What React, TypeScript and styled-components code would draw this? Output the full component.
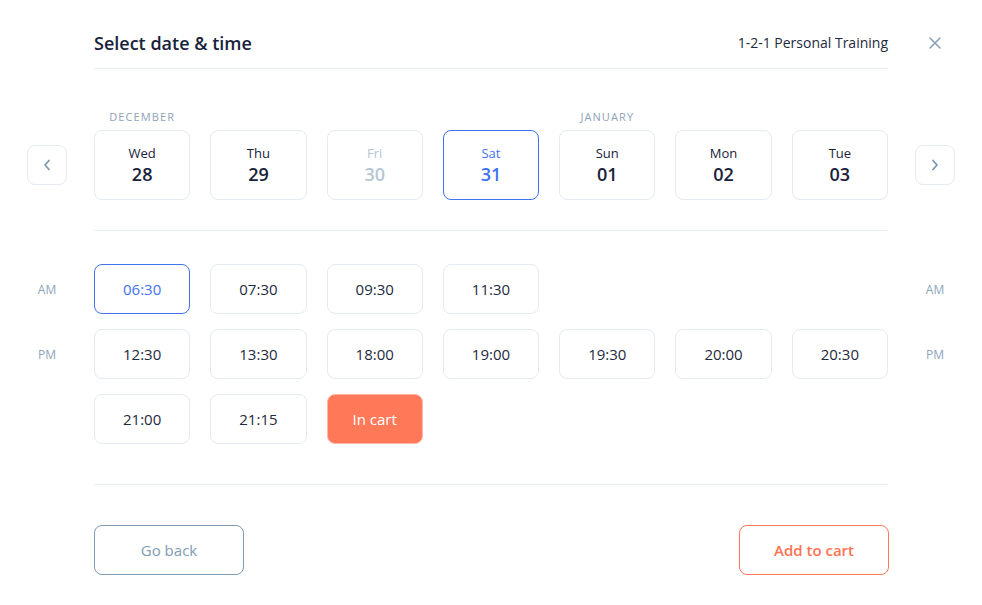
import React from "react";
import styled, { createGlobalStyle, css } from "styled-components";

const Global = createGlobalStyle`
  html, body { margin: 0; padding: 0; background: #ffffff; }
  body { font-family: "Open Sans", "Noto Sans", sans-serif; color: #1b2536; }
  * { box-sizing: border-box; }
`;

const Page = styled.div`
  width: 982px;
  height: 605px;
  background: #fff;
  display: flex;
  flex-direction: column;
`;

const Band = styled.div`
  display: grid;
  grid-template-columns: 94px 1fr 94px;
`;

const Side = styled.div<{ $align?: string }>`
  display: flex;
  justify-content: center;
  align-items: ${(p) => p.$align || "center"};
`;

const Header = styled.div`
  display: flex;
  align-items: center;
  justify-content: space-between;
  padding: 31px 0 13px;
  border-bottom: 1px solid #e9eef3;
`;

const Title = styled.h1`
  margin: 0;
  font-size: 18px;
  line-height: 24px;
  font-weight: 600;
  color: #18223a;
`;

const Service = styled.div`
  font-size: 14px;
  line-height: 24px;
  color: #1e2a3d;
`;

const CloseBtn = styled.button`
  border: 0;
  background: none;
  padding: 0;
  margin-top: 31px;
  height: 24px;
  display: flex;
  align-items: center;
  cursor: pointer;
`;

const DateSection = styled(Band)`
  grid-template-rows: auto auto;
  padding: 41px 0 30px;
`;

const Divider = styled.div`
  border-bottom: 1px solid #e9eef3;
`;

const Cols = styled.div`
  display: grid;
  grid-template-columns: repeat(7, 1fr);
  column-gap: 20px;
`;

const Month = styled.div`
  font-size: 11px;
  line-height: 14px;
  letter-spacing: 1.1px;
  color: #8ea3b8;
  text-align: center;
  margin-bottom: 6px;
  height: 14px;
`;

const ArrowBtn = styled.button`
  width: 40px;
  height: 40px;
  border: 1px solid #e5ebf1;
  border-radius: 8px;
  background: #fff;
  display: flex;
  align-items: center;
  justify-content: center;
  padding: 0;
  cursor: pointer;
`;

const DateCard = styled.button<{ $selected?: boolean; $disabled?: boolean }>`
  height: 70px;
  border: 1px solid #e4eaf0;
  border-radius: 8px;
  background: #fff;
  display: flex;
  flex-direction: column;
  align-items: center;
  justify-content: center;
  font-family: inherit;
  color: #18223a;
  padding: 0;
  cursor: pointer;
  ${(p) =>
    p.$selected &&
    css`
      border-color: #3f73f2;
      color: #3f73f2;
    `}
  ${(p) =>
    p.$disabled &&
    css`
      color: #b6c5d4;
    `}
`;

const DayName = styled.span`
  font-size: 13px;
  line-height: 18px;
`;

const DayNum = styled.span`
  font-size: 18px;
  line-height: 24px;
  font-weight: 600;
`;

const TimesSection = styled.div`
  display: flex;
  flex-direction: column;
  gap: 15px;
  padding: 33px 0 40px;
`;

const Meridiem = styled.span`
  font-size: 12px;
  color: #8ea3b8;
`;

const TimeBtn = styled.button<{ $selected?: boolean; $inCart?: boolean }>`
  height: 50px;
  border: 1px solid #e4eaf0;
  border-radius: 8px;
  background: #fff;
  font-family: inherit;
  font-size: 15px;
  color: #1e2a3d;
  padding: 0;
  cursor: pointer;
  ${(p) =>
    p.$selected &&
    css`
      border-color: #3f73f2;
      color: #3f73f2;
    `}
  ${(p) =>
    p.$inCart &&
    css`
      background: #ff7858;
      border-color: #ffb7a6;
      color: #ffffff;
    `}
`;

const Footer = styled.div`
  display: flex;
  justify-content: space-between;
  padding-top: 40px;
  margin-right: -1px;
`;

const ActionBtn = styled.button<{ $accent?: boolean }>`
  width: 150px;
  height: 50px;
  border-radius: 8px;
  background: #fff;
  font-family: inherit;
  font-size: 15px;
  cursor: pointer;
  border: 1px solid ${(p) => (p.$accent ? "#ff7858" : "#7f9bb5")};
  color: ${(p) => (p.$accent ? "#ff7353" : "#7f9bb5")};
  font-weight: ${(p) => (p.$accent ? 600 : 500)};
`;

const Chevron = ({ dir }: { dir: "left" | "right" }) => (
  <svg width="10" height="14" viewBox="0 0 10 14" fill="none">
    <path
      d={dir === "left" ? "M7 2.5 L3 7 L7 11.5" : "M3 2.5 L7 7 L3 11.5"}
      stroke="#7c97b2"
      strokeWidth="1.8"
      strokeLinecap="round"
      strokeLinejoin="round"
    />
  </svg>
);

const CloseIcon = () => (
  <svg width="12" height="12" viewBox="0 0 12 12" fill="none">
    <path d="M1 1 L11 11 M11 1 L1 11" stroke="#8aa0b8" strokeWidth="1.6" strokeLinecap="round" />
  </svg>
);

const dates = [
  { month: "DECEMBER", day: "Wed", num: "28" },
  { month: "", day: "Thu", num: "29" },
  { month: "", day: "Fri", num: "30", disabled: true },
  { month: "", day: "Sat", num: "31", selected: true },
  { month: "JANUARY", day: "Sun", num: "01" },
  { month: "", day: "Mon", num: "02" },
  { month: "", day: "Tue", num: "03" },
];

type Slot = { t: string; selected?: boolean; inCart?: boolean };
const rows: { label: string; slots: Slot[] }[] = [
  { label: "AM", slots: [{ t: "06:30", selected: true }, { t: "07:30" }, { t: "09:30" }, { t: "11:30" }] },
  {
    label: "PM",
    slots: [{ t: "12:30" }, { t: "13:30" }, { t: "18:00" }, { t: "19:00" }, { t: "19:30" }, { t: "20:00" }, { t: "20:30" }],
  },
  { label: "", slots: [{ t: "21:00" }, { t: "21:15" }, { t: "In cart", inCart: true }] },
];

export default function App() {
  return (
    <Page>
      <Global />
      <Band>
        <Side />
        <Header>
          <Title>Select date &amp; time</Title>
          <Service>1-2-1 Personal Training</Service>
        </Header>
        <Side $align="flex-start">
          <CloseBtn aria-label="Close">
            <CloseIcon />
          </CloseBtn>
        </Side>
      </Band>

      <DateSection>
        <Side />
        <Cols>
          {dates.map((d) => (
            <Month key={d.day}>{d.month}</Month>
          ))}
        </Cols>
        <Side />
        <Side>
          <ArrowBtn aria-label="Previous">
            <Chevron dir="left" />
          </ArrowBtn>
        </Side>
        <Cols>
          {dates.map((d) => (
            <DateCard key={d.day} $selected={d.selected} $disabled={d.disabled}>
              <DayName>{d.day}</DayName>
              <DayNum>{d.num}</DayNum>
            </DateCard>
          ))}
        </Cols>
        <Side>
          <ArrowBtn aria-label="Next">
            <Chevron dir="right" />
          </ArrowBtn>
        </Side>
      </DateSection>

      <Band>
        <Side />
        <Divider />
        <Side />
      </Band>

      <TimesSection>
        {rows.map((r, i) => (
          <Band key={i}>
            <Side>{r.label && <Meridiem>{r.label}</Meridiem>}</Side>
            <Cols>
              {r.slots.map((s) => (
                <TimeBtn key={s.t} $selected={s.selected} $inCart={s.inCart}>
                  {s.t}
                </TimeBtn>
              ))}
            </Cols>
            <Side>{r.label && <Meridiem>{r.label}</Meridiem>}</Side>
          </Band>
        ))}
      </TimesSection>

      <Band>
        <Side />
        <Divider />
        <Side />
      </Band>

      <Band>
        <Side />
        <Footer>
          <ActionBtn>Go back</ActionBtn>
          <ActionBtn $accent>Add to cart</ActionBtn>
        </Footer>
        <Side />
      </Band>
    </Page>
  );
}
